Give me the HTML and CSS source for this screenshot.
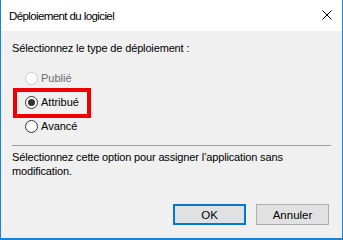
FILE: index.html
```html
<!DOCTYPE html>
<html lang="fr">
<head>
<meta charset="utf-8">
<title>Déploiement du logiciel</title>
<link rel="stylesheet" href="styles.css">
</head>
<body>
<div class="window">
  <div class="titlebar">
    <span class="title">Déploiement du logiciel</span>
    <svg class="close" width="10" height="10" viewBox="0 0 10 10"><path d="M0.5 0.5 L9.5 9.5 M9.5 0.5 L0.5 9.5" stroke="#000" stroke-width="1" fill="none"/></svg>
  </div>
  <div class="content">
    <p class="prompt">Sélectionnez le type de déploiement :</p>
    <div class="options">
      <div class="radio disabled"><span class="circle"></span><span>Publié</span></div>
      <div class="radio checked"><span class="circle"></span><span>Attribué</span></div>
      <div class="radio"><span class="circle"></span><span>Avancé</span></div>
    </div>
    <div class="sep"></div>
    <p class="desc">Sélectionnez cette option pour assigner l’application sans modification.</p>
    <div class="buttons">
      <div class="btn default">OK</div>
      <div class="btn">Annuler</div>
    </div>
  </div>
  <div class="highlight"></div>
</div>
</body>
</html>
```
FILE: styles.css
```css
* { box-sizing: border-box; }
html, body { margin: 0; padding: 0; }
body {
  font-family: "Liberation Sans", Arial, sans-serif;
  font-size: 11px;
  color: #000;
  background: #fff;
}
.window {
  position: relative;
  width: 343px;
  height: 240px;
  border-left: 1px solid #1883d7;
  border-right: 1px solid #1883d7;
  border-bottom: 2px solid #1883d7;
  display: flex;
  flex-direction: column;
  background: #f0f0f0;
}
.titlebar {
  height: 31px;
  background: #fff;
  display: flex;
  align-items: center;
  justify-content: space-between;
  padding: 0 10px 0 8px;
}
.title { font-size: 11.5px; line-height: 14px; letter-spacing: -0.6px; }
.close { display: block; margin-top: -1px; }
.content {
  flex: 1;
  display: flex;
  flex-direction: column;
  padding: 10px 11px 13px 11px;
}
.prompt { margin: 0; line-height: 15px; letter-spacing: -0.15px; }
.options { margin-top: 10px; display: flex; flex-direction: column; }
.radio {
  height: 24px;
  display: flex;
  align-items: center;
  padding-left: 13px;
}
.circle {
  width: 13px;
  height: 13px;
  border: 1px solid #333;
  border-radius: 50%;
  background: #fff;
  margin-right: 3px;
  display: flex;
  align-items: center;
  justify-content: center;
}
.radio.checked .circle::after {
  content: "";
  width: 7px;
  height: 7px;
  border-radius: 50%;
  background: #333;
}
.radio.disabled { color: #6d6d6d; }
.radio.disabled .circle { border-color: #cccccc; }
.sep { height: 1px; background: #a0a0a0; margin-top: 7px; }
.desc { margin: 4px 0 0; line-height: 14px; letter-spacing: -0.15px; }
.buttons {
  margin-top: auto;
  display: flex;
  justify-content: flex-end;
  gap: 10px;
  padding-right: 2px;
}
.btn {
  width: 73px;
  height: 21px;
  background: #e1e1e1;
  border: 1px solid #adadad;
  display: flex;
  align-items: center;
  justify-content: center;
  font-size: 11.5px;
}
.btn.default { border: 2px solid #0078d7; }
.highlight {
  position: absolute;
  left: 12px;
  top: 88px;
  width: 78px;
  height: 30px;
  border: 4px solid #ee0000;
}
```
